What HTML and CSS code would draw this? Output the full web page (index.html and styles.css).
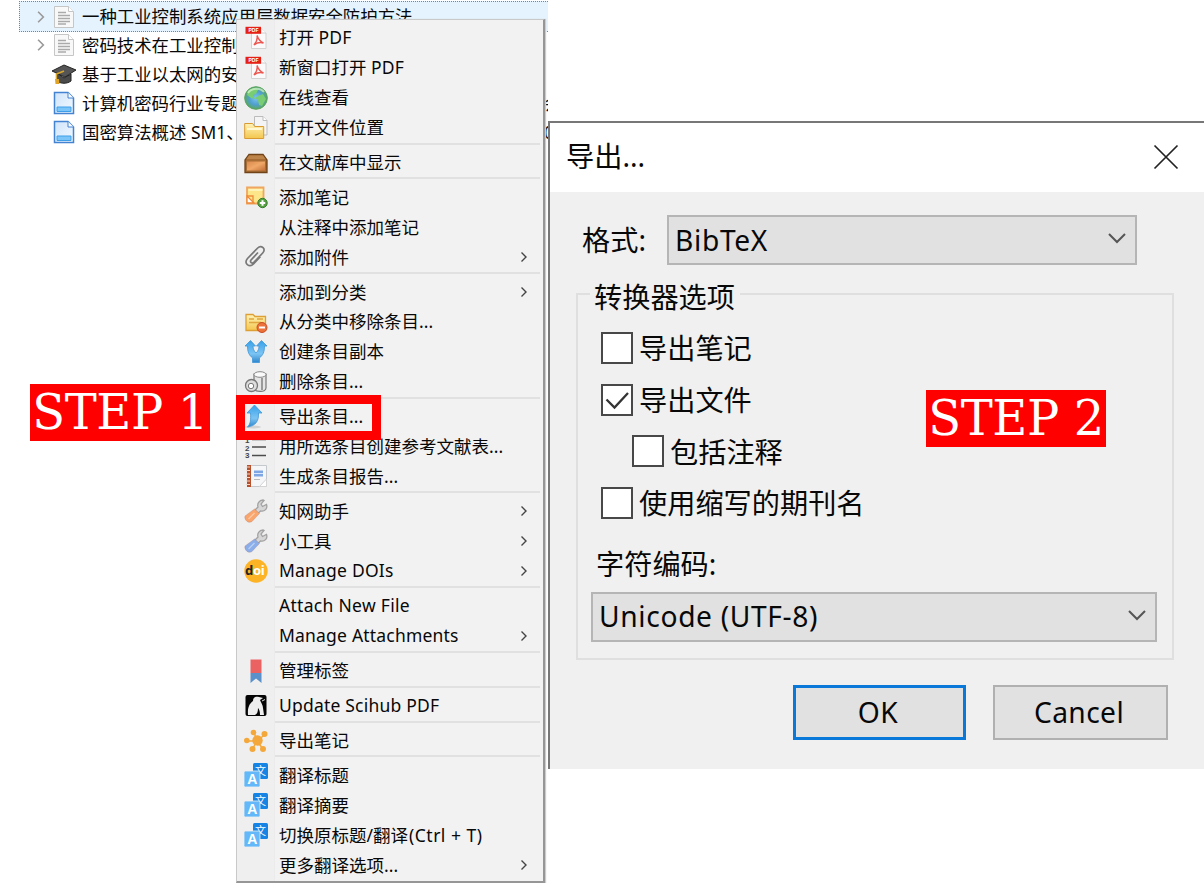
FILE: index.html
```html
<!DOCTYPE html>
<html lang="zh-CN">
<head>
<meta charset="utf-8">
<title>导出条目</title>
<link rel="stylesheet" href="styles.css">
</head>
<body>
<svg class="defs" aria-hidden="true">
  <defs>
    <linearGradient id="g-blue" x1="0" y1="0" x2="0" y2="1"><stop offset="0" stop-color="#35a0e8"/><stop offset=".6" stop-color="#7cc4f3"/><stop offset="1" stop-color="#2d86cc"/></linearGradient>
    <linearGradient id="g-page" x1="0" y1="0" x2="1" y2="1"><stop offset="0" stop-color="#cfe4fb"/><stop offset="1" stop-color="#f4faff"/></linearGradient>
    <linearGradient id="g-folder" x1="0" y1="0" x2="0" y2="1"><stop offset="0" stop-color="#fff3b8"/><stop offset="1" stop-color="#f3c64e"/></linearGradient>
    <linearGradient id="g-box" x1="0" y1="0" x2="1" y2="1"><stop offset="0" stop-color="#d98a4c"/><stop offset=".5" stop-color="#f0a868"/><stop offset="1" stop-color="#c4713a"/></linearGradient>
    <radialGradient id="g-globe"><stop offset="0" stop-color="#7cc4f0"/><stop offset=".6" stop-color="#4f9fd0"/><stop offset="1" stop-color="#5aa860"/></radialGradient>
    <symbol id="i-doc" viewBox="0 0 24 24"><path d="M2.500 1.500h14l5 5v16h-19z" fill="#f8f8f8" stroke="#c6c6c6"/><path d="M16.500 1.500v5h5" fill="#fff" stroke="#c6c6c6"/><path d="M6 7.500h8M6 10.500h12M6 13.500h12M6 16.500h12M6 19h8" stroke="#aaa" stroke-width="1.300"/></symbol>
    <symbol id="i-page" viewBox="0 0 24 24"><path d="M2.500 1.500h13.500l5.500 5.500v15.500h-19z" fill="url(#g-page)" stroke="#4482d2" stroke-width="1.500"/><path d="M16 1.500V7h5.500" fill="#fff" stroke="#4482d2"/><path d="M5 16h14v4.500H5z" fill="#7cc5f8" stroke="#3e9fe8"/></symbol>
    <symbol id="i-pdf" viewBox="0 0 24 24"><path d="M7.500 2h9.500l5 5v15.500H7.500z" fill="#fafafa" stroke="#d2d2d2"/><path d="M17 2v5h5" fill="#fff" stroke="#ccc"/><path d="M1.500.8H17v7H1.500z" fill="#e52015"/><text x="4.500" y="6.200" class="t-pdf">PDF</text><path d="M13 9.500c1 3 2 5.500 6.500 7.500-4-1-7 0-9.500 2 2-2.500 4-6 3-9.500z" fill="none" stroke="#ec5550" stroke-width="1.500"/></symbol>
    <symbol id="i-tr" viewBox="0 0 24 24"><rect x="9" width="15" height="16" rx="1.500" fill="#1684e4"/><text x="11" y="12" class="t-wen">文</text><rect y="8" width="16" height="16" rx="1.500" fill="#62b8f8" stroke="#f0f0f0" stroke-width=".8"/><text x="3.200" y="21" class="t-a">A</text></symbol>
    <symbol id="i-wrench" viewBox="0 0 24 24"><path d="M11 11l3-3c-1-3 1-7 5-7l1 .5-3 3.500 1.500 2.500 4-2c1.500 4-2 7.500-6 6.500L14 14.500z" fill="#d6d6d6" stroke="#a2a2a2" stroke-width="1.300"/><path d="M10.500 10l5 4.500-7.500 8c-3.500 2.500-8-1.500-7-5.500z" fill="currentColor" stroke="#a77" stroke-opacity=".3"/><path d="M10.500 14L4.500 20" stroke="#fff" stroke-opacity=".4" stroke-width="1.500"/></symbol>
    <symbol id="i-right" viewBox="0 0 8 12"><path d="M1.500 1.500L6 6l-4.500 4.500" fill="none" stroke="currentColor" stroke-width="1.400"/></symbol>
    <symbol id="i-down" viewBox="0 0 20 12"><path d="M2 2l8 8 8-8" fill="none" stroke="currentColor" stroke-width="2"/></symbol>
  </defs>
</svg>

<main class="library">
  <div class="row selected"><svg class="twisty"><use href="#i-right"/></svg><svg class="icon"><use href="#i-doc"/></svg><span class="title">一种工业控制系统应用层数据安全防护方法</span></div>
  <div class="row"><svg class="twisty"><use href="#i-right"/></svg><svg class="icon"><use href="#i-doc"/></svg><span class="title">密码技术在工业控制</span></div>
  <div class="row"><span class="twisty"></span><svg class="icon" viewBox="0 0 24 24"><path d="M5 11v8c4 3 10 3 14 0v-7l-7 4z" fill="#4a4a4a" stroke="#222"/><path d="M0 9L12 3l12 5-11 7z" fill="#555" stroke="#242424"/><path d="M12 9L4.500 12v6" fill="none" stroke="#d9a62c" stroke-width="1.600"/><path d="M3 17h4l.5 5h-4z" fill="#e0a323"/></svg><span class="title">基于工业以太网的安</span></div>
  <div class="row"><span class="twisty"></span><svg class="icon"><use href="#i-page"/></svg><span class="title">计算机密码行业专题</span><span class="tail">会</span></div>
  <div class="row"><span class="twisty"></span><svg class="icon"><use href="#i-page"/></svg><span class="title">国密算法概述 <span class="lat">SM1</span>、</span><span class="tail">0</span></div>
</main>

<nav class="menu">
  <div class="item"><svg class="icon"><use href="#i-pdf"/></svg><span>打开 <span class="lat">PDF</span></span></div>
  <div class="item"><svg class="icon"><use href="#i-pdf"/></svg><span>新窗口打开 <span class="lat">PDF</span></span></div>
  <div class="item"><svg class="icon" viewBox="0 0 24 24"><circle cx="12" cy="12" r="11.300" fill="url(#g-globe)" stroke="#5aa35e"/><path d="M4 5c4-4 9-3 10-1l-2 4-3 1 2 4-4-1-4-3zM14 10l5-2 3 5-4 7-3-1-1-5-3-2z" fill="#79cd72"/><path d="M4 7c3-5 12-6 16-1" stroke="#d5f5d0" stroke-width="2" fill="none" opacity=".7"/></svg><span>在线查看</span></div>
  <div class="item"><svg class="icon" viewBox="0 0 24 24"><path d="M10.500.5H19l4 4V19H10.500z" fill="#f4f4f4" stroke="#bbb"/><path d="M19 .5v4h4" fill="#fff" stroke="#bbb"/><path d="M.7 7.500h8l2 3h9v12h-19z" fill="url(#g-folder)" stroke="#d99b30"/><path d="M3 13h15" stroke="#fff8d0" stroke-width="2"/></svg><span>打开文件位置</span></div>
  <div class="sep"></div>
  <div class="item"><svg class="icon" viewBox="0 0 24 24"><path d="M5 3.500h14l4 5.500v12.500H1V9z" fill="#a86c35" stroke="#704418" stroke-width="1.300"/><path d="M5 4.500h14l2.500 3.500h-19z" fill="#bd8449"/><path d="M3 10.500h18v9H3z" fill="url(#g-box)"/></svg><span>在文献库中显示</span></div>
  <div class="sep"></div>
  <div class="item"><svg class="icon" viewBox="0 0 24 24"><path d="M3 2.500h16.500v16H3z" fill="#fde58a" stroke="#efa660" stroke-width="1.800"/><path d="M4.500 5h14" stroke="#fff4b8" stroke-width="2"/><path d="M3 11l7 7H3z" fill="#fff" stroke="#ee8a38" stroke-width="1.300"/><path d="M3 11h6v7" fill="none" stroke="#ee8a38" stroke-width="1.300"/><circle cx="18.500" cy="18" r="4.700" fill="#58a142" stroke="#327b29"/><path d="M18.500 15.300v5.400M15.800 18h5.400" stroke="#fff" stroke-width="2"/></svg><span>添加笔记</span></div>
  <div class="item"><span class="icon"></span><span>从注释中添加笔记</span></div>
  <div class="item"><svg class="icon" viewBox="0 0 24 24"><path d="M14 7.500L7 15c-1.500 2 1 4 2.700 2.500l9-9.500c4-4-1.500-8.500-5-5L3.500 13.500c-4.500 5 2 9.500 6 5.500l7-7.500" fill="none" stroke="#777" stroke-width="1.700"/></svg><span>添加附件</span><svg class="arrow"><use href="#i-right"/></svg></div>
  <div class="sep"></div>
  <div class="item"><span class="icon"></span><span>添加到分类</span><svg class="arrow"><use href="#i-right"/></svg></div>
  <div class="item"><svg class="icon" viewBox="0 0 24 24"><path d="M2 4.500h7l2 2h10.500v14H2z" fill="url(#g-folder)" stroke="#dda036" stroke-width="1.300"/><path d="M5 9h5M13 9h6M5 12.500h12" stroke="#e0a63f" stroke-width="1.300"/><circle cx="18" cy="17.500" r="5" fill="#ed713a" stroke="#c84c24"/><path d="M15 17.500h6" stroke="#fff" stroke-width="2"/></svg><span>从分类中移除条目...</span></div>
  <div class="item"><svg class="icon" viewBox="0 0 24 24"><path d="M6.500.5L11.500 6H9c0 3 1 5 3 7 2-2 3-4 3-7h-2.500l5-5.500L23 6h-2.500c0 6-1.500 9-5 12v4.500h-7V18c-3.500-3-5-6-5-12H1z" fill="url(#g-blue)" stroke="#3f97d8" stroke-width=".8"/></svg><span>创建条目副本</span></div>
  <div class="item"><svg class="icon" viewBox="0 0 24 24"><path d="M10 4v14c0 4 12 5 12 0V4z" fill="#e5e5e5" stroke="#777" stroke-width="1.200"/><path d="M18 8v12" stroke="#999" stroke-width="2"/><ellipse cx="16" cy="4.500" rx="6" ry="2.800" fill="#fafafa" stroke="#888"/><circle cx="7.500" cy="15.500" r="6" fill="#ddd" stroke="#777" stroke-width="1.300"/><circle cx="7" cy="16" r="2.700" fill="#fff" stroke="#777"/></svg><span>删除条目...</span></div>
  <div class="sep"></div>
  <div class="item"><svg class="icon" viewBox="0 0 24 24"><ellipse cx="9" cy="22" rx="8" ry="1.500" fill="#000" opacity=".12"/><path d="M10.500 0L18 8h-3.500c.5 8-3 13-11 14 3-3 3.500-7 3-14H3z" fill="url(#g-blue)" stroke="#3f97d8" stroke-width=".8"/></svg><span>导出条目...</span></div>
  <div class="item"><svg class="icon" viewBox="0 0 24 24"><path d="M8 4.500h14M8 12h14M8 20.500h14" stroke="#4c4c4c" stroke-width="1.300"/><text x="1" y="8" class="t-num">1</text><text x="1" y="15.500" class="t-num">2</text><text x="1" y="23" class="t-num">3</text></svg><span>用所选条目创建参考文献表...</span></div>
  <div class="item"><svg class="icon" viewBox="0 0 24 24"><path d="M5 1.500h17.500v21H5z" fill="#f5f6f8" stroke="#c5c8cc"/><path d="M3 1h4v22H3z" fill="#b5512c"/><path d="M2 3h4M2 6.500h4M2 10h4M2 13.500h4M2 17h4M2 20.500h4" stroke="#f5d8c8" stroke-width="1.200"/><path d="M10 6.500h9v6h-9z" fill="#7fa7e4"/><path d="M10 9.500h9" stroke="#dce9ff"/><path d="M10 15.500h6" stroke="#bbb"/><path d="M22.500 15l-7 7.500h7z" fill="#fff" stroke="#d4d4d4"/></svg><span>生成条目报告...</span></div>
  <div class="sep"></div>
  <div class="item"><svg class="icon orange"><use href="#i-wrench"/></svg><span>知网助手</span><svg class="arrow"><use href="#i-right"/></svg></div>
  <div class="item"><svg class="icon blue"><use href="#i-wrench"/></svg><span>小工具</span><svg class="arrow"><use href="#i-right"/></svg></div>
  <div class="item"><svg class="icon" viewBox="0 0 24 24"><circle cx="12" cy="12" r="11.700" fill="#fcb426"/><text x="1" y="15.500" class="t-doi">d<tspan fill="#fff">oi</tspan></text></svg><span class="lat">Manage DOIs</span><svg class="arrow"><use href="#i-right"/></svg></div>
  <div class="sep"></div>
  <div class="item"><span class="icon"></span><span class="lat wide">Attach New File</span></div>
  <div class="item"><span class="icon"></span><span class="lat">Manage Attachments</span><svg class="arrow"><use href="#i-right"/></svg></div>
  <div class="sep"></div>
  <div class="item"><svg class="icon" viewBox="0 0 24 24"><path d="M6.500.500h11V14h-11z" fill="#eb6263"/><path d="M6.500 14h11v10L12 19.500 6.500 24z" fill="#5a91cb"/></svg><span>管理标签</span></div>
  <div class="sep"></div>
  <div class="item"><svg class="icon" viewBox="0 0 24 24"><rect x="1.500" y="1" width="21" height="21" rx="2" fill="#050505"/><path d="M4 21c-.5-7 1-11 5-14 0-4 3-5 6-4l4 1-3 2c1 3 3 5 3 8l1 7h-4c0-4-1-6-2-7 0 4-1 6-3 7z" fill="#eee"/><path d="M18 7l3-1.500" stroke="#ddd"/></svg><span class="lat">Update Scihub PDF</span></div>
  <div class="sep"></div>
  <div class="item"><svg class="icon" viewBox="0 0 24 24"><path d="M13 12L10 3.500M13 12l8-6.500M13 12H3M13 12L8.500 20M13 12l6 8" stroke="#f4a83c" stroke-width="1.500"/><g fill="#f4a83c"><circle cx="13.500" cy="11.500" r="5.200"/><circle cx="9.500" cy="3.500" r="2.800"/><circle cx="20.500" cy="5" r="3"/><circle cx="2.800" cy="11.500" r="2.800"/><circle cx="8.500" cy="20" r="3"/><circle cx="19" cy="20" r="3"/></g></svg><span>导出笔记</span></div>
  <div class="sep"></div>
  <div class="item"><svg class="icon"><use href="#i-tr"/></svg><span>翻译标题</span></div>
  <div class="item"><svg class="icon"><use href="#i-tr"/></svg><span>翻译摘要</span></div>
  <div class="item"><svg class="icon"><use href="#i-tr"/></svg><span>切换原标题/翻译<span class="lat shortcut">(Ctrl + T)</span></span></div>
  <div class="item"><span class="icon"></span><span>更多翻译选项...</span><svg class="arrow"><use href="#i-right"/></svg></div>
</nav>

<section class="dialog">
  <header class="titlebar"><span>导出...</span><svg class="close" viewBox="0 0 26 26"><path d="M1.500 1.500l23 23M24.500 1.500l-23 23" stroke="#222" stroke-width="1.700"/></svg></header>
  <div class="format"><span class="format-label">格式:</span><div class="select"><span class="lat">BibTeX</span><svg class="chev"><use href="#i-down"/></svg></div></div>
  <div class="group">
    <div class="legend">转换器选项</div>
    <div class="check"><span class="box"></span><span>导出笔记</span></div>
    <div class="check"><span class="box"><svg viewBox="0 0 28 28"><path d="M3.500 13.500l8 8L25 7" fill="none" stroke="#333" stroke-width="2.300"/></svg></span><span>导出文件</span></div>
    <div class="check nested"><span class="box"></span><span>包括注释</span></div>
    <div class="check"><span class="box"></span><span>使用缩写的期刊名</span></div>
    <div class="enc-label">字符编码:</div>
    <div class="select"><span class="lat">Unicode (UTF-8)</span><svg class="chev"><use href="#i-down"/></svg></div>
  </div>
  <footer class="buttons"><div class="btn primary"><span class="lat">OK</span></div><div class="btn"><span class="lat">Cancel</span></div></footer>
</section>

<div class="highlight"></div>
<div class="step step-1">STEP 1</div>
<div class="step step-2">STEP 2</div>
</body>
</html>
```
FILE: styles.css
```css
* { box-sizing: border-box; }
body {
  margin: 0;
  width: 1204px;
  height: 883px;
  position: relative;
  overflow: hidden;
  background: #fff;
  color: #080808;
  font-family: "Noto Sans", "Noto Sans CJK SC", sans-serif;
  font-size: 17.5px;
  white-space: nowrap;
}
svg { display: block; flex: none; }
.defs { position: absolute; width: 0; height: 0; }
.icon { width: 24px; height: 24px; flex: none; }
.orange { color: #f9a56c; }
.blue { color: #8aaeea; }

.library { width: 548px; padding: 1px 0 0 19px; font-size: 17.4px; }
.row {
  display: flex;
  align-items: center;
  height: 29px;
  padding-left: 16px;
  overflow: hidden;
}
.row.selected {
  height: 31px;
  margin-bottom: -2px;
  background: #e5f3ff;
  border: 1px dotted #3c94dc;
  border-right: 0;
  padding-left: 15px;
}
.twisty { width: 12px; height: 14px; margin-right: 5px; color: #999; }
.title { margin-left: 6px; margin-top: -2px; }
.row:not(.selected) .title { margin-top: -1px; }
.tail { margin-left: auto; width: 4px; overflow: hidden; }

.menu {
  position: absolute;
  left: 236px;
  top: 19px;
  width: 309px;
  height: 864px;
  padding: 3px 3px 0 7px;
  border: 1px solid #c9c9c9;
  border-right: 2px solid #969696;
  border-bottom: 2px solid #969696;
  background: linear-gradient(90deg, #efefef 37px, #ebebeb 37px, #ebebeb 38px, #f2f2f2 38px);
  box-shadow: 1px 0 1px #ccc;
}
.item { display: flex; align-items: center; height: 29.9px; gap: 11px; }
.item > span { margin-top: -2px; }
.item .lat { letter-spacing: .2px; }
.item .wide { letter-spacing: .3px; }
.item .shortcut { margin-left: 1px; letter-spacing: .5px; }
.arrow { width: 8px; height: 12px; margin-left: auto; margin-right: 12px; color: #444; }
.sep { height: 5px; margin-left: 31px; border-top: 2px solid #e1e1e1; border-bottom: 3px solid transparent; }

.dialog {
  position: absolute;
  left: 548px;
  top: 121px;
  width: 656px;
  height: 648px;
  padding-top: 1px;
  border-left: 2px solid #777;
  border-top: 2px solid #777;
  background: linear-gradient(#fff 1px, #f0f0f0 1px);
  font-size: 28.2px;
}
.titlebar {
  display: flex;
  align-items: center;
  justify-content: space-between;
  height: 68px;
  padding: 0 25px 0 16px;
  background: #fff;
}
.titlebar span { margin-top: -7px; }
.close { width: 26px; height: 26px; margin-top: -3px; }
.format { display: flex; align-items: center; margin: 23px 67px 0 32px; }
.format-label { width: 85px; margin-top: -4px; }
.select {
  display: flex;
  flex: 1;
  align-items: center;
  justify-content: space-between;
  height: 50px;
  padding: 0 8px 0 6px;
  border: 2px solid #b5b5b5;
  background: #e1e1e1;
}
.select .lat { letter-spacing: .65px; margin-top: -1px; }
.chev { width: 20px; height: 12px; color: #555; margin-bottom: 4px; }
.group {
  width: 598px;
  height: 367px;
  margin: 28px 0 0 26px;
  padding: 0 15px 0 13px;
  border: 2px solid #dfdfdf;
}
.legend { width: 150px; height: 42px; line-height: 42px; margin: -19px 0 0 -1px; padding-left: 4px; background: #f0f0f0; }
.check { display: flex; align-items: center; gap: 6px; height: 51.7px; margin-left: 10px; }
.check > span:last-child { margin-top: -2px; }
.legend + .check { margin-top: 4px; }
.nested { margin-left: 41px; }
.box { width: 32px; height: 32px; border: 2px solid #484848; background: #fff; }
.enc-label { height: 42px; line-height: 42px; margin: 14px 0 7px 5px; }
.buttons { display: flex; justify-content: flex-end; gap: 27px; margin: 25px 36px 0 0; }
.btn {
  display: flex;
  align-items: center;
  justify-content: center;
  width: 175px;
  height: 55px;
  border: 2px solid #b0b0b0;
  background: #e1e1e1;
}
.btn .lat { letter-spacing: .4px; margin: -1px 3px 0 0; }
.btn.primary { width: 173px; border: 3px solid #0a78d8; }

.highlight { position: absolute; left: 236px; top: 395px; width: 145px; height: 45px; border: 9px solid #fe0000; }
.step {
  position: absolute;
  width: 180px;
  height: 57px;
  background: #fe0000;
  color: #fff;
  font-family: "DejaVu Serif", serif;
  font-size: 48px;
  line-height: 57px;
  letter-spacing: -.4px;
  text-align: center;
}
.step-1 { left: 30px; top: 384px; }
.step-2 { left: 926px; top: 390px; }

.t-pdf { font: bold 5px "Liberation Sans", sans-serif; fill: #fff; }
.t-wen { font: 11px "Noto Sans CJK SC", sans-serif; fill: #fff; }
.t-a { font: bold 14px "Liberation Sans", sans-serif; fill: #fff; }
.t-num { font: bold 8px "Liberation Sans", sans-serif; fill: #444; }
.t-doi { font: bold 13px "Noto Sans", sans-serif; fill: #222; letter-spacing: -.3px; }
```
